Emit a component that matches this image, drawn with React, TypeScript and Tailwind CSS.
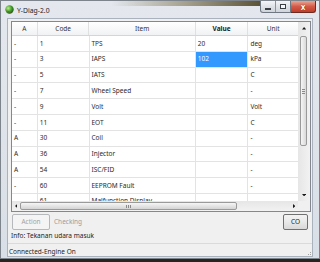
import React from "react";

type Row = { a: string; code: string; item: string; value: string; unit: string; sel?: boolean };

const rows: Row[] = [
  { a: "-", code: "1", item: "TPS", value: "20", unit: "deg" },
  { a: "-", code: "3", item: "IAPS", value: "102", unit: "kPa", sel: true },
  { a: "-", code: "5", item: "IATS", value: "", unit: "C" },
  { a: "-", code: "7", item: "Wheel Speed", value: "", unit: "-" },
  { a: "-", code: "9", item: "Volt", value: "", unit: "Volt" },
  { a: "-", code: "11", item: "EOT", value: "", unit: "C" },
  { a: "A", code: "30", item: "Coil", value: "", unit: "-" },
  { a: "A", code: "36", item: "Injector", value: "", unit: "-" },
  { a: "A", code: "54", item: "ISC/FID", value: "", unit: "-" },
  { a: "-", code: "60", item: "EEPROM Fault", value: "", unit: "-" },
  { a: "-", code: "61", item: "Malfunction Display", value: "", unit: "-" },
];

const Tri = ({ dir }: { dir: "up" | "down" | "left" | "right" }) => {
  const pts = {
    up: "0,4 3.5,0 7,4",
    down: "0,0 3.5,4 7,0",
    left: "4,0 0,3.5 4,7",
    right: "0,0 4,3.5 0,7",
  }[dir];
  const w = dir === "up" || dir === "down" ? 7 : 4;
  const h = dir === "up" || dir === "down" ? 4 : 7;
  return (
    <svg width={w * 0.6} height={h * 0.6} viewBox={`0 0 ${w} ${h}`}>
      <polygon points={pts} fill="#1a1a1a" />
    </svg>
  );
};

export default function App() {
  return (
    <div className="w-[320px] h-[262px] bg-[#26251f] overflow-hidden font-['Noto_Sans',sans-serif] text-[6.5px] text-[#2a2a2a]">
      <div className="relative h-[259px] w-[320px] flex flex-col border border-[#7d848c] bg-gradient-to-b from-[#e4e8ee] to-[#d9dfe6]">
        {/* glass tint on title bar */}
        <div className="absolute left-[110px] top-0 h-[5px] w-[150px] bg-gradient-to-r from-transparent via-[#7a704c]/60 to-[#5a5236]" />
        {/* Title bar */}
        <div className="relative flex h-[17px] items-start">
          <div className="ml-[4px] mt-[4px] h-[9px] w-[9px]">
            <svg width="9" height="9" viewBox="0 0 9 9">
              <defs>
                <radialGradient id="g" cx="0.35" cy="0.35" r="0.7">
                  <stop offset="0" stopColor="#b8f08a" />
                  <stop offset="0.6" stopColor="#3f9a2a" />
                  <stop offset="1" stopColor="#1d5a14" />
                </radialGradient>
              </defs>
              <circle cx="4.5" cy="4.5" r="4.2" fill="url(#g)" />
              <path d="M1.2 5.5 Q3 7.5 6 7.8 Q4 6 1.2 5.5Z" fill="#c8372d" />
            </svg>
          </div>
          <div className="ml-[3px] mt-[5px] text-[6.8px] leading-[9px] text-[#1e1e1e]">Y-Diag-2.0</div>
          <div className="ml-auto mr-[3px] flex">
            <div className="flex h-[12px] overflow-hidden rounded-bl-[3px] border border-t-0 border-[#6f7782] bg-gradient-to-b from-[#f4f6f8] via-[#dfe3e8] to-[#cfd5dc]">
              <div className="flex w-[15px] items-end justify-center border-r border-[#8d949d] pb-[2.5px]">
                <div className="h-[2px] w-[6px] border border-[#3a3f45] bg-white" />
              </div>
              <div className="flex w-[14px] items-center justify-center">
                <div className="h-[5px] w-[6px] border border-[#3a3f45] bg-white/70" />
              </div>
            </div>
            <div className="flex h-[12px] w-[25px] items-center justify-center rounded-br-[3px] border border-l-0 border-t-0 border-[#6b2a22] bg-gradient-to-b from-[#e9a594] via-[#d35a48] to-[#c23b2a]">
              <span className="text-[8px] font-bold leading-none text-white [text-shadow:0_0_1px_#3a0a05]">x</span>
            </div>
          </div>
        </div>

        {/* Client area */}
        <div className="mx-[6px] mb-[1px] flex flex-1 flex-col border border-[#aab3bd] bg-[#f0f0f0]">
          <div className="pl-[3px] pr-[1px] pt-[2px]">
            {/* Table */}
            <div className="flex h-[191px] flex-col border border-[#828790] bg-white">
              <div className="flex h-[179px]">
                <div className="flex w-[288px] flex-col overflow-hidden">
                  {/* header */}
                  <div className="flex h-[14px] shrink-0 border-b border-[#d5d5d5] bg-gradient-to-b from-white to-[#f1f2f4] text-[#333]">
                    <div className="flex w-[26px] items-center justify-center border-r border-[#e0e0e0]">A</div>
                    <div className="flex w-[52px] items-center justify-center border-r border-[#e0e0e0]">Code</div>
                    <div className="flex w-[107px] items-center justify-center border-r border-[#e0e0e0]">Item</div>
                    <div className="flex w-[53px] items-center justify-center border-r border-[#e0e0e0] font-bold text-[#222]">Value</div>
                    <div className="flex w-[50px] items-center justify-center">Unit</div>
                  </div>
                  {rows.map((r, i) => (
                    <div key={i} className="flex h-[15.8px] shrink-0 border-b border-[#e3e3e3]">
                      <div className="flex w-[26px] items-center border-r border-[#e3e3e3] pl-[2px]">{r.a}</div>
                      <div className="flex w-[52px] items-center border-r border-[#e3e3e3] pl-[2px]">{r.code}</div>
                      <div className="flex w-[107px] items-center border-r border-[#e3e3e3] pl-[2px]">{r.item}</div>
                      <div
                        className={
                          r.sel
                            ? "flex w-[53px] items-center border-r border-[#e3e3e3] bg-[#3399ff] pl-[2px] text-white"
                            : "flex w-[53px] items-center border-r border-[#e3e3e3] pl-[2px]"
                        }
                      >
                        {r.value}
                      </div>
                      <div className="flex w-[50px] items-center pl-[2px]">{r.unit}</div>
                    </div>
                  ))}
                </div>
                {/* vertical scrollbar */}
                <div className="flex w-[12px] flex-col bg-gradient-to-r from-[#e6e6e6] to-[#f2f2f2]">
                  <div className="flex h-[13px] shrink-0 items-center justify-center">
                    <Tri dir="up" />
                  </div>
                  <div className="ml-[2px] mt-[1px] flex h-[110px] w-[7px] shrink-0 flex-col items-center justify-center gap-[1px] rounded-[2px] border border-[#9a9a9a] bg-gradient-to-r from-[#f6f6f6] to-[#d9d9d9]">
                    <div className="h-[1px] w-[3px] bg-[#8a8a8a]" />
                    <div className="h-[1px] w-[3px] bg-[#8a8a8a]" />
                    <div className="h-[1px] w-[3px] bg-[#8a8a8a]" />
                  </div>
                  <div className="flex-1" />
                  <div className="flex h-[12px] shrink-0 items-center justify-center">
                    <Tri dir="down" />
                  </div>
                </div>
              </div>
              {/* horizontal scrollbar */}
              <div className="flex h-[10px]">
                <div className="flex w-[288px] items-center bg-gradient-to-b from-[#e6e6e6] to-[#f2f2f2]">
                  <div className="flex w-[8px] items-center justify-center">
                    <Tri dir="left" />
                  </div>
                  <div className="flex h-[8px] w-[217px] items-center justify-center gap-[1px] rounded-[2px] border border-[#9a9a9a] bg-gradient-to-b from-[#f6f6f6] to-[#d4d4d4]">
                    <div className="h-[3px] w-[1px] bg-[#8a8a8a]" />
                    <div className="h-[3px] w-[1px] bg-[#8a8a8a]" />
                    <div className="h-[3px] w-[1px] bg-[#8a8a8a]" />
                  </div>
                  <div className="flex-1" />
                  <div className="flex w-[8px] items-center justify-center">
                    <Tri dir="right" />
                  </div>
                </div>
                <div className="w-[12px] bg-[#f0f0f0]" />
              </div>
            </div>
          </div>

          {/* button row */}
          <div className="mt-[2px] flex h-[16px] items-center pl-[4px] pr-[4px]">
            <div className="flex h-[16px] w-[38px] items-center justify-center rounded-[2px] border border-[#b5b9bc] bg-[#f4f4f4] text-[#a3a3a3]">
              Action
            </div>
            <div className="ml-[4px] text-[#9c9c9c]">Checking</div>
            <div className="ml-auto flex h-[16px] w-[25px] items-center justify-center rounded-[2px] border border-[#707070] bg-gradient-to-b from-[#f3f3f3] via-[#e9e9e9] to-[#d8d8d8] text-[#222]">
              CO
            </div>
          </div>

          <div className="mt-[1px] h-[9px] pl-[3px] leading-[9px] text-[#1e1e1e]">Info: Tekanan udara masuk</div>

          <div className="mt-[3px] flex flex-1 items-start border-t border-[#dadada] pl-[1px] pt-[3px]">
            <span className="leading-[9px] text-[#1e1e1e]">Connected-Engine On</span>
            <div className="ml-auto mr-[1px] mt-[5px] flex flex-col items-end gap-[1px]">
              <div className="h-[1px] w-[1px] bg-[#a0a0a0]" />
              <div className="flex gap-[1px]">
                <div className="h-[1px] w-[1px] bg-[#a0a0a0]" />
                <div className="h-[1px] w-[1px] bg-[#a0a0a0]" />
              </div>
            </div>
          </div>
        </div>
      </div>
    </div>
  );
}
